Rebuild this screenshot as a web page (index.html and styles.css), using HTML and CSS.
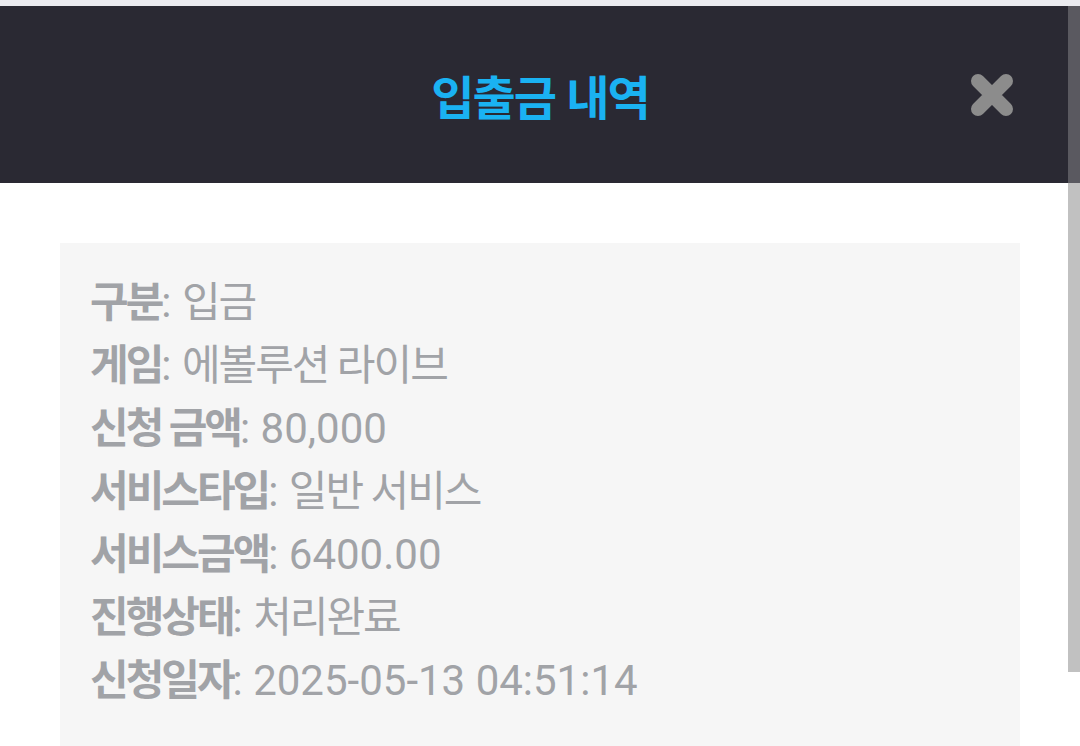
FILE: index.html
```html
<!doctype html>
<html lang="ko">
<head>
  <meta charset="utf-8">
  <meta name="viewport" content="width=device-width, initial-scale=1">
  <title>입출금 내역</title>
  <link rel="stylesheet" href="styles.css">
</head>
<body>
  <div class="topStrip"></div>
  <div class="header">
    <div></div>
    <h1 class="title">입출금 내역</h1>
    <a class="closeBtn" href="#" aria-label="닫기">
      <svg width="48" height="48" viewBox="0 0 48 48">
        <path d="M10 10 L38 38 M38 10 L10 38" stroke="#8c8c8c" stroke-width="14" stroke-linecap="round" fill="none"/>
      </svg>
    </a>
  </div>

  <div class="content">
    <div class="detailBox">
      <div class="row"><span class="label">구분</span>: <span class="val">입금</span></div>
      <div class="row"><span class="label">게임</span>: <span class="val">에볼루션 라이브</span></div>
      <div class="row"><span class="label">신청 금액</span>: <span class="num">80,000</span></div>
      <div class="row"><span class="label">서비스타입</span>: <span class="val">일반 서비스</span></div>
      <div class="row"><span class="label">서비스금액</span>: <span class="num">6400.00</span></div>
      <div class="row"><span class="label">진행상태</span>: <span class="val">처리완료</span></div>
      <div class="row"><span class="label">신청일자</span>: <span class="num">2025-05-13 04:51:14</span></div>
    </div>
  </div>

  <div class="scrollbar">
    <div class="scrollTop"></div>
    <div class="scrollThumb"></div>
  </div>
</body>
</html>
```

FILE: styles.css
```css
html{
  height: 100%;
}

body{
  margin: 0;
  height: 100%;
  overflow: hidden;
  background: #ffffff;
  font-family: Roboto, "Noto Sans CJK KR", sans-serif;
}

.topStrip{
  height: 6px;
  background: #ebebf0;
}

.header{
  height: 177px;
  background: #2a2933;
  display: grid;
  grid-template-columns: 1fr auto 1fr;
  align-items: center;
}

.title{
  margin: 0;
  font-family: "Noto Sans CJK KR", sans-serif;
  font-size: 47px;
  font-weight: 700;
  letter-spacing: -2px;
  color: #1ab2f2;
  line-height: 1;
}

.closeBtn{
  justify-self: end;
  margin-right: 64px;
  width: 48px;
  height: 48px;
  display: block;
}

.closeBtn svg{
  display: block;
}

.content{
  padding: 60px 60px 0 60px;
}

.detailBox{
  background: #f6f6f6;
  padding: 28px 30px 60px 30px;
}

.row{
  font-size: 42px;
  line-height: 63px;
  color: #a1a3a7;
  white-space: nowrap;
}

.label{
  font-weight: 700;
  letter-spacing: -3px;
}

.val{
  letter-spacing: -2px;
}

.num{
  font-size: 42px;
}

.scrollbar{
  position: absolute;
  top: 6px;
  right: 0;
  width: 12px;
}

.scrollTop{
  height: 177px;
  background: #5a5960;
}

.scrollThumb{
  height: 489px;
  background: #c1c1c1;
}
```
